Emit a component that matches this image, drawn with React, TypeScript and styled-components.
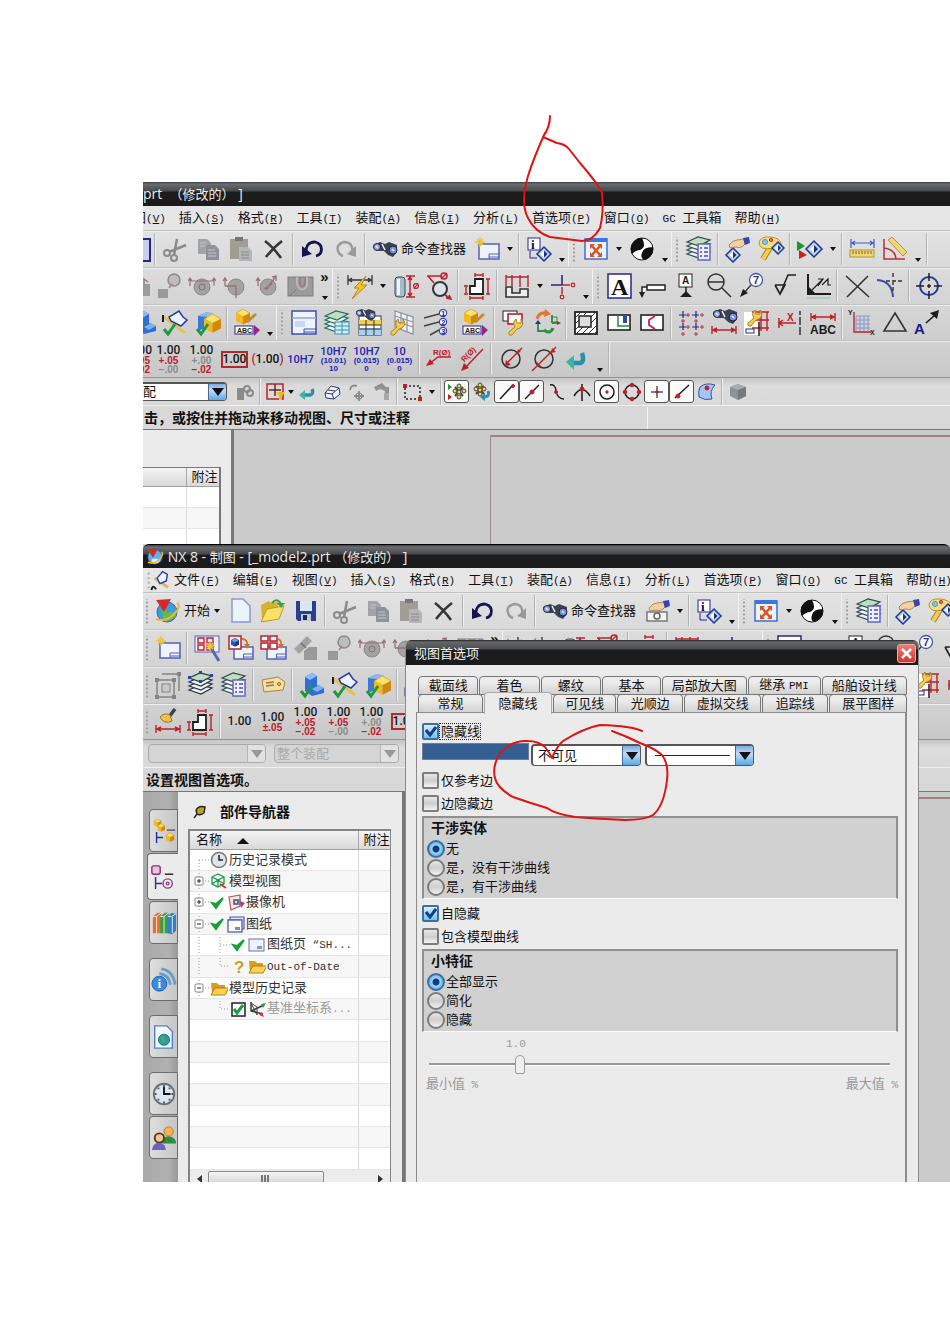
import React, { ReactNode } from 'react';
import styled, { createGlobalStyle, css } from 'styled-components';

const SONG = `"Liberation Sans", "Noto Sans CJK SC", sans-serif`;
const UI = `"Open Sans", "Noto Sans CJK SC", sans-serif`;

const Global = createGlobalStyle`
  * { box-sizing: border-box; }
  body { margin: 0; background: #fff; }
  button, select, input { font: inherit; color: inherit; margin: 0; }
`;

/* ---------- drawing helpers ---------- */
const K = '#1d1d1d';
const R = '#bd2028';
const B = '#26268c';
const G = '#8b8b8b';

const ln = (d: string, stroke = K, w = 1.5, fill = 'none') => (
  <path d={d} stroke={stroke} strokeWidth={w} fill={fill} />
);
const fl = (d: string, fill: string) => <path d={d} fill={fill} />;
const ci = (x: number, y: number, r: number, stroke = K, w = 1.5, fill = 'none') => (
  <circle cx={x} cy={y} r={r} stroke={stroke} strokeWidth={w} fill={fill} />
);
const tx = (x: number, y: number, s: string, size: number, fill = K, font = 'Liberation Sans') => (
  <text x={x} y={y} fontSize={size} fontWeight="bold" fontFamily={`"${font}", sans-serif`} fill={fill}>{s}</text>
);
const diamond = (x: number, y: number, s: number) => (
  <>
    <path d={`M${x} ${y - s}L${x + s} ${y}L${x} ${y + s}L${x - s} ${y}Z`} fill="#c3d2f2" stroke="#1e3a8f" strokeWidth="1.5" />
    <path d={`M${x} ${y - s / 2}L${x + s / 2} ${y}L${x} ${y + s / 2}Z`} fill="#16307f" />
    <path d={`M${x} ${y - s / 2}L${x - s / 2} ${y}L${x} ${y + s / 2}Z`} fill="#fff" />
  </>
);
const wrench = (x: number, y: number) => (
  <g transform={`translate(${x} ${y})`}>
    <path d="M1 13L7 8Q4 4 8 0L9 4L13 4L13 0Q17 5 12 9L9 10L4 16Q0 17 1 13Z" fill="#f2cd4e" stroke="#a8832b" />
  </g>
);
const tick = (x: number, y: number, s = 1) => (
  <path d={`M${x} ${y}L${x + 4 * s} ${y + 5 * s}L${x + 11 * s} ${y - 5 * s}`} fill="none" stroke="#1f9a3a" strokeWidth={3 * s} />
);
const cube = (x: number, y: number, s: number, a = '#ffe268', b = '#f5b81f', c = '#cf8a0c') => (
  <>
    <path d={`M${x} ${y + s * 0.3}L${x + s / 2} ${y}L${x + s} ${y + s * 0.3}L${x + s / 2} ${y + s * 0.55}Z`} fill={a} stroke={c} strokeWidth=".6" />
    <path d={`M${x} ${y + s * 0.3}L${x + s / 2} ${y + s * 0.55}V${y + s * 1.1}L${x} ${y + s * 0.85}Z`} fill={b} />
    <path d={`M${x + s} ${y + s * 0.3}L${x + s / 2} ${y + s * 0.55}V${y + s * 1.1}L${x + s} ${y + s * 0.85}Z`} fill={c} />
  </>
);
const stack = (c = '#2f4a52', green = '#bfe0bd') => (
  <>
    {[16, 12, 8, 4].map((y) => (
      <path key={y} d={`M2 ${y + 3}L13 ${y - 2}L25 ${y + 1}L14 ${y + 7}Z`} fill={y === 4 ? green : '#eef3f2'} stroke={c} strokeWidth="1.2" />
    ))}
  </>
);
const list = (x: number, y: number) => (
  <>
    <rect x={x} y={y} width="12" height="16" fill="#eef0ff" stroke="#6466c0" strokeWidth="1.5" />
    {ln(`M${x + 2} ${y + 4}h2m2 0h4M${x + 2} ${y + 8}h2m2 0h4M${x + 2} ${y + 12}h2m2 0h4`, '#4a4fae')}
  </>
);
const page = (x: number, y: number, w: number, h: number, c = '#5560b8') => (
  <>
    <rect x={x} y={y} width={w} height={h} fill="#f0f3fe" stroke={c} strokeWidth="1.5" />
    {ln(`M${x + w / 2} ${y + h}v-5h${w / 2}m0 3h-${w / 2}`, c, 1)}
  </>
);
const glasses = (x: number, y: number) => (
  <g transform={`translate(${x} ${y})`}>
    <path d="M0 3L7 0L12 2L16 0L24 3L24 10L20 15L15 13L11 9L6 9L1 7Z" fill="#3c434f" />
    <circle cx="4" cy="5" r="3.5" fill="#8ea6e8" stroke="#20242e" />
    <circle cx="20" cy="8" r="4" fill="#7290e6" stroke="#20242e" />
    <path d="M3 4L5 6M19 7L21 9M9 2L12 8" stroke="#e9efff" strokeWidth="1.5" />
  </g>
);
const hand = (x: number, y: number) => (
  <g transform={`translate(${x} ${y})`}>
    <path d="M0 8Q4 3 8 3L15 2L16 7Q12 12 7 10L1 11Z" fill="#f4cf9f" stroke="#9a7448" strokeWidth=".8" />
    <path d="M14 1L20 0L21 6L16 8Z" fill="#3545b5" />
  </g>
);
const hDim = (y: number, x1 = 2, x2 = 26, c = R) =>
  ln(`M${x1} ${y - 4}v8M${x2} ${y - 4}v8M${x1} ${y}H${x2}M${x1 + 5} ${y - 2}L${x1 + 1} ${y}l4 2M${x2 - 5} ${y - 2}L${x2 - 1} ${y}l-4 2`, c, 1.4);
const star = (x: number, y: number) => ln(`M${x - 5} ${y}h10M${x} ${y - 5}v10M${x - 3} ${y - 3}l6 6M${x + 3} ${y - 3}l-6 6`, '#e5c838', 1.5);
const profile = (c = K) => ln('M6 22V14H11V7H19V22Z', c, 1.8, '#fff');
const abc = (
  <>
    {cube(3, 0, 14)}
    <rect x="2" y="17" width="18" height="8" fill="#fff" stroke={B} />
    {tx(4, 24, 'ABC', 7)}
    {ln('M14 13L23 5', '#c68b2a', 3)}
    {fl('M21 16L27 21L21 27Z', '#93278f')}
  </>
);
const swirl = (
  <>
    {ci(14, 14, 11, '#111', 1, '#fff')}
    {fl('M14 3A11 11 0 0 0 4 19Q8 15 12 15Q19 12 14 3Z', '#111')}
    {fl('M25 12Q15 12 14 18Q12 23 16 25Q26 22 25 12Z', '#111')}
  </>
);

/* ---------- 28px toolbar icons ---------- */
const icons: Record<string, ReactNode> = {
  saveEdge: <rect x="5" y="4" width="21" height="22" fill="#c8cfee" stroke={B} strokeWidth="2" />,
  cut: <>{ci(6, 18, 3, G, 2)}{ci(13, 23, 3, G, 2)}{ln('M8 17L25 10M13 20L16 4', G, 2.5)}</>,
  copy: <>{fl('M4 4h9l4 4v11H4Z', '#a2a4aa')}{fl('M12 10h9l4 4v11H12Z', '#8f929b')}{ln('M6 8h6M6 11h5M14 15h7M14 18h8M14 21h8', '#c3c5ca', 1)}</>,
  paste: <>{fl('M3 4h18v20H3Z', '#a19c94')}{fl('M8 2h8v4H8Z', '#77777a')}{fl('M12 12h9l4 4v10H12Z', '#b3b5b8')}{ln('M14 17h8M14 20h8M14 23h8', G, 1)}</>,
  del: ln('M5 6Q13 12 21 23M22 6Q14 12 6 22', '#363636', 2.6),
  undo: <>{ln('M7 19Q6 7 16 7Q24 9 22 17Q21 20 17 21', '#141452', 2.8)}{fl('M3 11L13 19L3 22Z', '#141452')}</>,
  redo: <>{ln('M20 19Q22 7 12 7Q4 9 6 16Q7 20 11 21', '#9a9a9a', 2.4)}{fl('M24 11L15 19L24 22Z', '#9a9a9a')}</>,
  binoc: <g transform="translate(2 7)">{glasses(0, 0)}</g>,
  sheet: <>{page(6, 9, 20, 15)}{star(7, 7)}</>,
  camera: <>{ln('M4 15V24H24V15Z', '#7a7a7a', 1.5, '#f5f5f5')}{ci(14, 19, 3, '#666')}{hand(6, 3)}</>,
  info: <><rect x="3" y="3" width="12" height="12" fill="#fff" stroke={B} />{tx(6, 14, 'i', 13, '#0a0a50', 'Liberation Serif')}{ln('M5 16V23H12', B, 1)}{diamond(19, 19, 7)}</>,
  fit: <><rect x="3" y="4" width="22" height="20" fill="#eaf1ff" stroke="#3a6fd2" strokeWidth="1.5" />{fl('M3 3h22v4H3Z', '#3a78e0')}{ln('M10 11L18 20M18 11L10 20', '#d9541e', 2.5)}{fl('M8 9h5l-5 5ZM20 9h-5l5 5ZM8 22h5l-5-5ZM20 22h-5l5-5Z', '#d9541e')}</>,
  shade: swirl,
  layers: <>{stack()}{list(13, 9)}</>,
  stack: <>{stack('#26324a')}{fl('M1 5h3v3H1ZM12 0h3v3h-3ZM23 3h3v3h-3ZM12 9h3v3h-3Z', '#2f3fb0')}</>,
  handDiamond: <>{diamond(9, 20, 7)}{hand(5, 2)}</>,
  palette: <>{ln('M14 11L6 24', '#a8832b', 6)}{ln('M14 11L6 24', '#f2cd4e', 4)}<path d="M2 8Q3 1 13 2Q24 3 24 9Q24 14 16 13Q3 16 2 8Z" fill="#f7dd7c" stroke="#b89432" />{ci(8, 7, 2.5, '#4f8fd0', 1, '#8cc6f0')}{ci(14, 5, 1.6, '#c33', 1, '#e66')}{diamond(21, 13, 6)}</>,
  play: <>{fl('M1 6L9 11L1 16Z', '#18962f')}{fl('M3 15L11 20L3 24Z', '#cc1f26')}{diamond(18, 14, 8)}</>,
  ruler: <>{ln('M3 4v9M26 4v9M3 8H26M7 6L4 8l3 2M22 6l3 2l-3 2', '#3b5fc0', 1.2)}<rect x="2" y="15" width="24" height="7" fill="#f0d678" stroke="#b49430" />{ln('M5 16v3m3-3v3m3-3v3m3-3v3m3-3v3m3-3v3m3-3v3', '#7c6418', 1)}</>,
  angle: <>{ln('M3 4V24H24M3 13Q14 14 15 24', '#b8303a', 1.5)}<path d="M7 5L11 2L26 17L22 21Z" fill="#f0d678" stroke="#b49430" /></>,
  project: <>{fl('M3 17h10v9H3Z', '#9a9a9a')}{ci(19, 8, 6, G, 1.5, '#bdbdbd')}{ln('M14 16L17 12', '#b07b80', 1.5)}</>,
  gearA: <>{fl('M17 12h9v12h-9Z', '#9c9c9c')}{ln('M20 12V7l4 3', '#a0777a')}</>,
  rotA: <>{ci(14, 15, 8, G, 1, '#a3a3a3')}{ci(14, 15, 3, '#8f6a6d', 1)}{ln('M2 14V6m-2 3l2-3l2 3M26 14V6m-2 3l2-3l2 3M2 9H26', '#987074', 1.2)}</>,
  rotB: <>{ci(15, 15, 8, G, 1, '#a3a3a3')}{ln('M4 14V6m-2 3l2-3l2 3M4 14H15V26', '#987074', 1.3)}</>,
  rotC: <>{ci(14, 15, 8, G, 1, '#a3a3a3')}{ln('M4 14V6m-2 3l2-3l2 3M12 18L22 4M22 9l0-5l-4 1M10 17l8-5', '#987074', 1.3)}</>,
  section: <><rect x="1" y="5" width="25" height="19" fill="#9a9a9a" stroke="#7f7f7f" />{ln('M10 5V12Q14 22 20 14V5', '#b9b9b9', 2)}{ln('M13 6v6q2 5 5 0V6M2 24L9 18', '#8c6d70', 1)}</>,
  bolt: <>{ln('M2 3v10M26 3v10M2 8H26M6 6L3 8l3 2M22 6l3 2l-3 2', '#333', 1.3)}<path d="M20 4L8 16H13L6 27L21 13H15Z" fill="#f6c71c" stroke="#c08312" /></>,
  cylinder: <><rect x="3" y="5" width="10" height="20" rx="3" fill="#a7bac9" stroke="#3d4a57" />{fl('M5 7h3v16H5Z', '#eef5fa')}{ln('M14 4h9M14 25h9M18 5V24M16 8l2-3l2 3M16 21l2 3l2-3', R, 1.4)}{ci(24, 14, 2.3, R, 1.3)}{ln('M22 17L26 11', R, 1)}</>,
  diameter: <>{ci(15, 17, 7, '#30363a', 2, '#dce1e4')}{ln('M2 4H16M3 4L9 11M20 23L26 27M21 26l5 1l-2-4', R, 1.6)}{ci(19, 4, 3, R, 1.5)}{ln('M16 7L22 1', R, 1.2)}</>,
  perimeter: <>{profile()}{ln('M11 3h8M11 1v4M19 1v4M24 7V22M22 7h4M22 22h4M2 14V22M0 14h4M0 22h4M6 26H19M6 24v4M19 24v4', R, 1.4)}</>,
  ordinate: <>{ln('M3 25V15H9V21H17V17H25V25Z', '#333', 1.6, '#eee')}{ln('M3 3V14M9 3V14M17 3V15M25 3V15M3 5H25', R, 1.4)}</>,
  origin: <>{ln('M13 3V13M2 13H13', B, 1.6)}{ln('M13 13H21M13 15V22', R, 1.4)}{ci(24, 13, 1.8, R, 1.2)}{ci(13, 25, 1.8, R, 1.2)}</>,
  note: <><rect x="2" y="2" width="23" height="24" fill="#fff" stroke={B} strokeWidth="1.5" />{tx(5, 23, 'A', 24, '#111', 'Liberation Serif')}</>,
  feature: <>{ln('M3 24V15H8M8 13h18v5H8Z', '#222', 1.5, '#fff')}{fl('M0 20h6l-3 6Z', K)}</>,
  datum: <><rect x="7" y="2" width="13" height="13" fill="#fff" stroke="#222" />{tx(10, 12, 'A', 10)}{ln('M14 15V22')}{fl('M14 19L20 25H8Z', K)}</>,
  symbol: <>{ci(11, 10, 8, '#333')}{ln('M3 10H19M17 16L26 25', '#333')}</>,
  balloon: <>{ci(18, 8, 6.5, '#4b55a8', 1.3, '#fff')}{tx(15, 12, '7', 11, '#2a3596')}{ln('M13 13L5 22', '#333', 1.3)}{fl('M2 25L5 17L10 21Z', K)}</>,
  surface: ln('M4 13H14L9 22L4 13M9 22L17 3H25', '#222', 1.6),
  weld: <>{ln('M4 2V22H27', K, 2)}{fl('M4 22V14L12 22Z', K)}{ln('M8 18L18 8M14 7h5l-5 7M18 13L24 7V13H27', K, 1.2)}{ln('M3 26H27', '#9bb', 1)}</>,
  cross: ln('M3 4L26 25M25 4L4 25', '#333', 1.6),
  centerCurve: <>{ln('M1 8Q16 9 17 25', '#3a4fa8', 2)}{ln('M17 1V5M17 8v5M10 9h4M17 9h3M22 9h4M17 15v4', '#333', 1.4)}</>,
  target: <>{ci(14, 14, 9, '#24399a', 2)}{ln('M14 1V9M14 12v4M14 19v8M1 14H9M12 14h4M19 14h8', '#222', 1.5)}</>,
  assembly: <>{fl('M7 6L14 2L19 5V14L26 17V22L14 25L7 20Z', '#2d6fd6')}{fl('M7 6L14 2L19 5L12 9Z', '#8dbcf5')}{fl('M14 18L21 14L26 17L19 21Z', '#7cb0f2')}{tick(3, 20)}</>,
  sketch: <>{ln('M3 8L24 24', '#e0c34a', 3)}{ln('M10 12L8 8L18 2L22 8L26 11L20 17Z', '#2a38a0', 1.5, '#eef3ff')}{ln('M2 6V13', K, 2)}{tick(3, 20)}</>,
  boxCheck: <>{fl('M4 7L13 3V18L4 22Z', '#3a78d8')}{fl('M4 7L13 3L20 4L12 8Z', '#8cb8f2')}{cube(10, 5, 17)}{tick(3, 20)}</>,
  abc,
  listSheet: <>{page(2, 2, 24, 23, '#3e4fa8')}{fl('M5 12h10v6H5Z', '#c8d6f8')}{ln('M2 9H26', '#8fa4df')}</>,
  layerTable: <>{stack('#2b6b62')}<rect x="12" y="13" width="14" height="12" fill="#cdeef8" stroke="#3b91b0" />{ln('M12 17h14M12 21h14M19 13v12', '#3b91b0', 1)}</>,
  tableBinoc: <><rect x="3" y="7" width="22" height="19" fill="#fff" stroke="#333" />{fl('M3 11h22v5H3Z', '#f5ce52')}{fl('M3 19h22v7H3Z', '#a9d0f2')}{ln('M3 16h22M3 20h22M10 11v15M18 11v15', '#333', 1)}<g transform="scale(.8)">{glasses(0, 0)}</g></>,
  gridWrench: <>{ln('M6 2L24 8V25L6 18ZM12 4V20M18 6V22M6 7L24 13M6 12L24 18', '#8a90a0', 1.2, '#f1f2f6')}{wrench(1, 10)}</>,
  leaders: <>{ln('M2 9L17 5M2 17L17 13M8 26L17 21', '#444', 1.5)}{[4, 13, 22].map((y, i) => <g key={y}>{ci(21, y, 3.6, '#3a45a8', 1.2, '#fff')}{tx(19, y + 3, `${i + 1}`, 8, B)}</g>)}</>,
  redWrench: <><rect x="3" y="2" width="14" height="10" fill="#fff" stroke="#222" /><rect x="8" y="5" width="14" height="10" fill="#fff" stroke={R} strokeWidth="1.6" />{wrench(8, 10)}</>,
  sync: <>{ln('M4 10Q6 3 13 4', '#e5752e', 3)}{fl('M12 0L18 5L11 8Z', '#e5752e')}{ln('M5 15V22H12M19 14V6M19 14H26', '#2c8f43', 1.8)}<rect x="19" y="8" width="5" height="5" fill="none" stroke="#2c8f43" />{fl('M24 12l4 2l-4 2Z', R)}{ln('M11 21Q17 26 20 19', '#2c8f43', 3)}{fl('M2 15l3-4l3 4Z', '#24369a')}</>,
  hatch: <><rect x="3" y="3" width="22" height="22" fill="#fff" stroke="#222" strokeWidth="1.8" />{ln('M3 9L9 3M3 15L7 11M3 21L7 17M4 25L11 18M10 25L17 18M16 25L25 16M22 25L25 22M19 14L25 8M19 8L24 3M12 6L15 3', '#333', 1)}<rect x="7" y="7" width="12" height="11" fill="#ddd" stroke="#222" strokeWidth="1.5" /></>,
  greenRect: <><rect x="3" y="6" width="22" height="15" fill="#fff" stroke="#222" strokeWidth="1.6" />{ln('M13 7V17H24', '#258a38')}{fl('M18 6h4v8h-4Z', '#3744a8')}</>,
  zigzag: <><rect x="3" y="6" width="22" height="15" fill="#fff" stroke="#222" strokeWidth="1.6" />{ln('M17 7L11 11V16L17 20', '#c02060', 1.8)}</>,
  crossGrid: <>{ln('M6 2v7M2 6h7M19 2v7M15 6h7M6 14v7M2 18h7M19 14v7M15 18h7', B, 1.2)}{[[11, 6], [25, 6], [11, 18], [25, 18], [6, 12], [19, 12], [6, 25], [19, 25]].map(([x, y]) => <g key={`${x}-${y}`}>{ci(x, y, 1.2, R, 1)}</g>)}</>,
  binocDim: <>{glasses(3, 0)}{hDim(21)}</>,
  wrenchDim: <><rect x="1" y="3" width="14" height="23" fill="#fff" />{ln('M9 3H26M18 3V22M9 11H26M24 3V22M9 19H26', R, 1.4)}{wrench(4, 1)}<rect x="3" y="20" width="8" height="4" fill="#fff" stroke={B} />{ln('M16 13V27', K, 1.4)}</>,
  xDim: <>{ln('M3 9V19M3 14H20M7 11L3 14l4 3', R, 1.5)}{ln('M24 2V6M24 8v8M24 18v8', '#333', 1.5)}{tx(11, 12, 'X', 10, R)}</>,
  abcDim: <>{hDim(8)}{tx(1, 25, 'ABC', 12)}</>,
  grid: <>{ln('M8 7v15M12 7v15M16 7v15M20 7v15M8 7h14M8 11h14M8 15h14M8 19h14', '#8795cf', 1)}{ln('M6 3V23H23', R, 1.3)}{tx(0, 6, 'Y', 7)}{tx(22, 26, 'X', 7)}</>,
  triangle: ln('M14 4L25 22H3Z', '#333', 1.6),
  arrowA: <>{tx(0, 25, 'A', 15, '#1a1a80')}{ln('M12 14L21 6', K, 1.6)}{fl('M25 1L23 10L16 4Z', K)}</>,
  radius: <>{tx(8, 10, 'R(Ø)', 8, R)}{ln('M26 12H13L4 19', R, 1.5)}{fl('M1 21L5 14L9 19Z', R)}</>,
  radiusDiag: <><g transform="rotate(-45 14 14)">{tx(6, 11, 'R(Ø)', 8, R)}</g>{ln('M25 4L7 23', R, 1.5)}{fl('M3 26L6 18L11 23Z', R)}</>,
  circIn: <>{ci(14, 14, 9, '#333', 1.5)}{ln('M9 19L25 3', R, 1.5)}{fl('M8 21l1-6l5 5ZM20 8l1-4l3 3Z', R)}</>,
  circOut: <>{ci(14, 14, 9, '#333', 1.5)}{ln('M2 26L26 2', R, 1.5)}{fl('M7 21l-1-5l6 6ZM21 8l1-5l4 4Z', R)}</>,
  back: <>{ln('M10 18H17Q22 17 19 8', '#2b8fb0', 4.5)}{fl('M3 17L11 10V25Z', '#3cb6a0')}</>,
  nx: <>{ci(14, 15, 10, '#2b6bb5', 1, '#3f9be0')}{fl('M7 8Q13 8 14 16Q19 13 23 19Q18 25 11 24Z', '#63bb4c')}<path d="M3 3L18 2L11 15Z" fill="#d8272b" />{ln('M3 22Q14 26 23 15Q28 8 24 6', '#f0b832', 2)}</>,
  nxTitle: <>{ci(14, 14, 11, '#2b6bb5', 1, '#58b4ee')}{fl('M9 18Q14 14 22 20Q16 26 9 23Z', '#e8f4fb')}<path d="M3 3L18 2L11 15Z" fill="#d8272b" />{ln('M3 22Q14 26 23 15Q28 8 24 6', '#f0b832', 2.5)}</>,
  newDoc: <path d="M6 2H17L24 9V25H6Z" fill="#edf2ff" stroke="#8b99d2" strokeWidth="1.5" />,
  open: <>{fl('M2 8L10 4L12 6L19 5V22L3 25Z', '#d8b12d')}<path d="M2 25L8 12L25 9L20 22Z" fill="#f8e06c" stroke="#c49a22" />{ln('M13 6Q18 0 22 7', '#39a04a', 2)}{fl('M18 6h8l-4 5Z', '#39a04a')}</>,
  save: <>{fl('M4 4H24V24H6L4 22Z', '#27418f')}{fl('M8 4h12v10H8Z', '#dce6f5')}{fl('M9 17h10v7H9Z', '#c7ccd4')}{fl('M11 18h4v5h-4Z', '#1b2858')}</>,
  viewWand: <><rect x="2" y="2" width="24" height="16" fill="#edf0ff" stroke="#5560b8" />{ln('M5 4h6v5H5ZM14 4h6v5h-6ZM5 11h6v5H5ZM14 11h6v5h-6Z', R, 1.4)}{ln('M18 14L26 27', '#5865bd', 3)}{star(17, 12)}</>,
  viewBlue: <>{page(8, 13, 19, 12)}<rect x="3" y="2" width="12" height="13" fill="#fff" stroke={R} strokeWidth="1.5" />{cube(5, 4, 8, '#76a6ee', '#2458b8', '#173878')}{ln('M16 5Q22 5 21 12', '#c7792b', 1.8)}{fl('M18 10h6l-3 5Z', '#c7792b')}</>,
  viewGrid: <>{page(8, 13, 19, 12)}{ln('M2 2h7v5H2ZM11 2h7v5h-7ZM2 9h7v6H2ZM11 9h7v6h-7Z', R, 1.5, '#fff')}{ln('M19 5Q23 6 22 12', '#c7792b', 1.8)}{fl('M19 10h6l-3 5Z', '#c7792b')}</>,
  auxView: <>{fl('M2 15L15 2L20 7L7 20Z', '#a3a3a3')}{fl('M12 17l5-4h8v13H12Z', '#9a9a9a')}{ln('M9 9l5 5', '#8a6668')}</>,
  group: <>{ln('M3 9h17v17H3ZM8 3h17v17', '#858585', 1.5)}{fl('M1 7h4v4H1ZM18 7h4v4h-4ZM1 24h4v4H1ZM18 24h4v4h-4ZM23 1h4v4h-4Z', '#858585')}<rect x="8" y="13" width="8" height="8" fill="#c9c9c9" stroke="#858585" /></>,
  tag: <><path d="M3 9L19 6L26 11L24 19L5 21Z" fill="#f6dfa4" stroke="#a9863c" />{ln('M7 12l8-1M7 15l8-1', '#97793a')}{ci(20, 13, 1.5, '#7c6226', 1)}</>,
  brushDim: <>{ln('M15 9L21 1', '#3a4350', 3.5)}<path d="M6 9Q10 4 16 7L18 13Q10 17 6 9Z" fill="#eebf4f" stroke="#9a7630" />{hDim(21)}</>,
  menuSketch: <>{fl('M3 6h2v2H3ZM3 11h2v2H3ZM3 16h2v2H3ZM3 21h2v2H3Z', '#aaa')}{ln('M10 12L25 22', '#d8bc4a', 3)}{ln('M13 12L19 5L24 8L23 15L16 18Z', '#2a38a0', 1.5, '#eef3ff')}{ln('M7 25Q8 18 12 24', K, 2)}</>,
};

/* ---------- 20px selection-bar icons ---------- */
const small: Record<string, ReactNode> = {
  gearBox: <>{fl('M2 6h7v12H2Z', G)}{ci(12, 7, 3, G, 2)}{ci(15, 11, 3, G, 2)}</>,
  filter: <><rect x="1" y="2" width="16" height="15" fill="none" stroke={R} strokeWidth="1.5" />{ln('M9 2V14M3 8H15', '#5a2b2b')}{fl('M10 10h9l-3 4v4h-3v-4Z', '#f2b91f')}</>,
  back: <>{ln('M7 13H13Q17 12 15 7', '#2b8fb0', 3.5)}{fl('M2 13L8 8V18Z', '#3cb6a0')}</>,
  eraser: <path d="M3 11L9 4L17 6L18 12L12 17L4 16ZM3 11L10 12L12 17M10 12L17 6M6 8L13 9" fill="#eef1ff" stroke="#333a60" />,
  rotMove: <>{ln('M3 8Q4 2 10 4M12 9v10M7 14h10', G, 1.8)}{ci(12, 14, 3, G, 1.2)}</>,
  hammer: <>{fl('M2 5L10 1L14 5H17V12H13V9L8 7L4 9Z', '#929292')}{fl('M12 11h5v7h-5Z', '#a9a9a9')}</>,
  lasso: <><path d="M2 4H17V17H2Z" fill="none" stroke="#222" strokeWidth="1.5" strokeDasharray="2 2" />{fl('M0 2h4v4H0ZM15 15h4v4h-4Z', R)}</>,
  snapOn: <>{fl('M1 2l4 3l-4 3Z', '#26933a')}{fl('M1 12l4 3l-4 3Z', R)}{ln('M8 5L16 14M16 5L8 14', '#444', 2)}{[[12, 4], [17, 9], [12, 15], [8, 9], [12, 10]].map(([x, y]) => <g key={`${x}-${y}`}>{ci(x, y, 2, '#444', 1, '#f0d84a')}</g>)}</>,
  snapOff: <>{ln('M4 4L12 12M12 4L4 12', '#444', 2)}{[[8, 3], [12, 7], [8, 12], [4, 7], [8, 8]].map(([x, y]) => <g key={`${x}-${y}`}>{ci(x, y, 2, '#444', 1, '#f0d84a')}</g>)}{ln('M13 15Q18 14 16 9', '#2b8fb0', 3)}{fl('M8 15l5-4v8Z', '#2b8fb0')}</>,
  endPoint: <>{ln('M3 17L15 4')}{ci(16, 4, 1.5, R, 1, R)}</>,
  midPoint: <>{ln('M3 17L17 3')}{ci(10, 10, 2, R, 1, R)}</>,
  control: <>{ln('M3 3Q8 2 9 8Q10 17 17 17')}{ci(9, 10, 1.5, R, 1, R)}</>,
  intersect: <>{ln('M10 2V19M2 14Q10 1 18 14')}{ci(10, 7, 2, R, 1, R)}</>,
  center: <>{ci(10, 10, 7)}{ci(10, 10, 1.2, R, 1, R)}</>,
  quadrant: <>{ci(10, 10, 7)}{ci(10, 3, 1.8, R, 1, R)}{ci(10, 17, 1.8, R, 1, R)}{ci(3, 10, 1.8, R, 1, R)}{ci(17, 10, 1.8, R, 1, R)}</>,
  point: <>{ln('M10 4V16M4 10H16', '#555')}{ci(10, 10, 1.2, R, 1, R)}</>,
  onCurve: <>{ln('M3 16L17 3')}{ci(6, 14, 2, R, 1, R)}</>,
  onFace: <><path d="M3 5Q9 0 18 3Q12 9 15 17Q8 19 2 15Q1 9 3 5Z" fill="#a6c5f4" stroke="#2d55ad" />{ci(10, 6, 2, R, 1, R)}</>,
  solid: <>{fl('M2 5L10 2L18 5V14L10 18L2 14Z', '#8e9298')}{fl('M2 5L10 2L18 5L10 8Z', '#a9adb3')}{fl('M10 8L18 5V14L10 18Z', '#757a82')}</>,
};

const Svg = ({ size = 28, box = 28, children }: { size?: number; box?: number; children: ReactNode }) => (
  <svg width={size} height={size} viewBox={`0 0 ${box} ${box}`} aria-hidden="true">{children}</svg>
);

/* ---------- window frame ---------- */
const Page = styled.main`
  position: relative;
  padding: 182px 0 162px 143px;
  overflow: hidden;
  font: 13px/16px ${SONG};
  color: #111;
`;
const Window = styled.section<{ $h: number }>`
  position: relative;
  display: flex;
  flex-direction: column;
  height: ${(p) => p.$h}px;
  overflow: hidden;
  background: #cbcbcb;
`;
const TitleBar = styled.header<{ $round?: boolean }>`
  flex: none;
  display: flex;
  align-items: center;
  height: 24px;
  padding: 0 3px 0 0;
  color: #ececec;
  font: 13px/18px ${UI};
  white-space: pre;
  background: linear-gradient(#3a3d3f 0, #6a6d70 2px, #47494b 9px, #1c1c1c 10px, #1a1a1a 100%);
  ${(p) => p.$round && css`
    border-top: 1px solid #000;
    border-radius: 6px 6px 0 0;
    padding-left: 3px;
  `}
`;
const TitleLatin = styled.span`
  font-size: 14px;
`;
const MenuBar = styled.nav`
  flex: none;
  display: flex;
  align-items: center;
  gap: 13px;
  height: 24px;
  background: #e6e6e6;
  overflow: hidden;
`;
const MenuButton = styled.button`
  flex: none;
  padding: 0;
  border: 0;
  background: none;
  line-height: 16px;
  white-space: pre;
`;
const FirstMenu = styled.span`
  flex: none;
  margin-left: -10px;
`;
const Latin = styled.span`
  font-family: "Liberation Mono", monospace;
  font-size: 11px;
`;

const tones = { a: ['#e2e2e2', '#dadada'], b: ['#dcdcdc', '#d4d4d4'], c: ['#d6d6d6', '#cecece'], d: ['#d2d2d2', '#c8c8c8'] };
type Tone = keyof typeof tones;
const Bar = styled.div<{ $tone: Tone; $h?: number }>`
  flex: none;
  display: flex;
  align-items: center;
  height: ${(p) => p.$h ?? 37}px;
  overflow: hidden;
  border-top: 1px solid #c2c2c2;
  box-shadow: inset 0 1px #ededed;
  background: linear-gradient(${(p) => tones[p.$tone][0]}, ${(p) => tones[p.$tone][1]});
`;
const Tool = styled.button<{ $w?: number; $clip?: boolean; $on?: boolean }>`
  flex: none;
  display: flex;
  align-items: center;
  justify-content: ${(p) => (p.$clip ? 'flex-end' : 'center')};
  width: ${(p) => p.$w ?? 33}px;
  height: ${(p) => ((p.$w ?? 33) === 25 ? 23 : 34)}px;
  padding: 0;
  border: 0;
  background: none;
  overflow: hidden;
  svg { flex: none; }
  ${(p) => p.$on && css`
    border: 1px solid #555;
    border-radius: 3px;
    background: #fafafa;
  `}
`;
const Sep = styled.i`
  flex: none;
  width: 2px;
  height: 32px;
  margin: 0 2px;
  border-left: 1px solid #b4b4b4;
  border-right: 1px solid #efefef;
`;
const GripBox = styled.i<{ $first?: boolean }>`
  flex: none;
  width: ${(p) => (p.$first ? 8 : 11)}px;
  height: 35px;
  padding: 5px 0;
  border-left: ${(p) => (p.$first ? 0 : 1)}px solid #f2f2f2;
  background: linear-gradient(#a0a0a0 2px, #f0f0f0 2px, transparent 3px) center / 2px 4px repeat-y;
  background-clip: content-box;
`;
const Drop = styled.button<{ $low?: boolean; $w?: number }>`
  flex: none;
  display: flex;
  justify-content: center;
  align-items: ${(p) => (p.$low ? 'flex-end' : 'center')};
  width: ${(p) => p.$w ?? 13}px;
  height: 26px;
  padding: 0;
  border: 0;
  background: none;
`;
const More = styled(Drop)`
  flex-direction: column;
  justify-content: space-between;
  align-items: center;
  width: 15px;
  height: 28px;
  font: bold 15px/10px "Liberation Sans", sans-serif;
`;
const Finder = styled.button`
  flex: none;
  display: flex;
  align-items: center;
  gap: 2px;
  padding: 0 4px 0 3px;
  border: 0;
  background: none;
  white-space: nowrap;
`;
const Start = styled(Finder)`
  gap: 3px;
  padding: 0 0 0 2px;
`;
const Dim = styled.span`
  display: flex;
  flex-direction: column;
  align-items: center;
`;
const DimLine = styled.span<{ $c: string; $k: 'main' | 'fit' | 'tol' | 'range' }>`
  color: ${(p) => p.$c};
  font: ${(p) => ({
    main: '500 12px/11px Roboto, sans-serif',
    fit: '500 11px/11px Roboto, sans-serif',
    tol: 'bold 10px/9px "Liberation Sans", sans-serif',
    range: 'bold 8px/8px "Liberation Sans", sans-serif',
  }[p.$k])};
`;
const DimBox = styled.span<{ $border?: boolean }>`
  padding: 1px 0;
  border: ${(p) => (p.$border ? 2 : 0)}px solid #b3272d;
  font: 500 12px/11px Roboto, sans-serif;
`;

const Caret = () => <svg width="6" height="4" aria-hidden="true"><path d="M0 0H6L3 4Z" fill="#111" /></svg>;

const BLUE = '#2222b4';
const dims: Record<string, [string, string][]> = {
  d1: [['1.00', K]],
  d2: [['1.00', K], ['±.05', R]],
  d3: [['1.00', K], ['+.05', R], ['−.02', R]],
  d4: [['1.00', K], ['+.05', R], ['−.00', G]],
  d5: [['1.00', K], ['+.00', G], ['−.02', R]],
  h1: [['10H7', BLUE]],
  h2: [['10H7', BLUE], ['(10.01)', BLUE], ['10', BLUE]],
  h3: [['10H7', BLUE], ['(0.015)', BLUE], ['0', BLUE]],
  h4: [['10', BLUE], ['(0.015)', BLUE], ['0', BLUE]],
};

/* Token strip: | separator, : grip, v drop-down, . overflow caret, > more, ~x clipped tool */
const Strip = ({ items, clip = 9 }: { items: string; clip?: number }) => (
  <>
    {items.split(' ').map((t, i) => {
      if (t === '|') return <Sep key={i} />;
      if (t === ':') return <GripBox key={i} $first={i === 0} />;
      if (t === 'v' || t === '.') return <Drop key={i} $low={t === '.'} aria-label="More"><Caret /></Drop>;
      if (t === '>') return <More key={i} aria-label="More tools"><span>»</span><Caret /></More>;
      if (t === 'finder') return <Finder key={i}><Svg>{icons.binoc}</Svg>命令查找器</Finder>;
      if (t === 'start') return <Start key={i}><Svg>{icons.nx}</Svg>开始</Start>;
      const clipped = t[0] === '~';
      const name = clipped ? t.slice(1) : t;
      let body: ReactNode;
      if (dims[name]) {
        const fit = name[0] === 'h';
        body = (
          <Dim>
            {dims[name].map(([s, c], k) => (
              <DimLine key={k} $c={c} $k={fit ? (k ? 'range' : 'fit') : (k ? 'tol' : 'main')}>{s}</DimLine>
            ))}
          </Dim>
        );
      } else if (name === 'boxed') body = <DimBox $border>1.00</DimBox>;
      else if (name === 'paren') body = <DimBox><DimLine $c={R} $k="main">(</DimLine>1.00<DimLine $c={R} $k="main">)</DimLine></DimBox>;
      else body = <Svg>{icons[name]}</Svg>;
      return <Tool key={i} $clip={clipped} $w={clipped ? clip : 33} aria-label={name}>{body}</Tool>;
    })}
  </>
);

const VIEW_TOOLS = 'info . : fit v shade . : layers | handDiamond palette | play v | ruler angle . |';
const DIM_TOOLS = 'project rotA rotB rotC section > : bolt v cylinder diameter | perimeter | ordinate v origin . : note feature datum symbol balloon surface weld | cross centerCurve | target';
const TABLE_TOOLS = 'abc . : listSheet layerTable tableBinoc gridWrench leaders | abc | redWrench sync | hatch greenRect zigzag | crossGrid binocDim wrenchDim xDim abcDim | grid triangle arrowA';

const menus: [string, string][] = [
  ['文件', 'F'], ['编辑', 'E'], ['视图', 'V'], ['插入', 'S'], ['格式', 'R'], ['工具', 'T'], ['装配', 'A'],
  ['信息', 'I'], ['分析', 'L'], ['首选项', 'P'], ['窗口', 'O'], ['GC 工具箱', ''], ['帮助', 'H'],
];
const MenuItem = ({ label, hot }: { label: string; hot: string }) => (
  <MenuButton>
    {label.startsWith('GC') ? <><Latin>GC </Latin>工具箱</> : label}
    {hot && <Latin>(<u>{hot}</u>)</Latin>}
  </MenuButton>
);

/* ---------- selection bar, prompt ---------- */
const SelectBar = styled.div`
  flex: none;
  display: flex;
  align-items: center;
  height: 28px;
  overflow: hidden;
  border-top: 1px solid #949494;
  background: linear-gradient(#c6c6c6, #dcdcdc 8px, #d9d9d9);
`;
const Indent = styled.span`
  flex: none;
  width: 5px;
`;
const Prompt = styled.p<{ $pad: number }>`
  flex: none;
  display: flex;
  align-items: center;
  height: 25px;
  margin: 0;
  padding-left: ${(p) => p.$pad}px;
  font-size: 14px;
  font-weight: bold;
  white-space: nowrap;
  border-top: 1px solid #f0f0f0;
  border-bottom: 1px solid #777;
  background: #d8d8d8;
`;
const PromptText = styled.span`
  flex: none;
  width: 504px;
  height: 22px;
  line-height: 22px;
  border-right: 1px solid #f2f2f2;
`;
const ComboWrap = styled.span<{ $w: number; $ghost?: boolean; $cut?: boolean }>`
  position: relative;
  flex: none;
  display: flex;
  width: ${(p) => p.$w}px;
  height: ${(p) => (p.$ghost || p.$cut ? 19 : 22)}px;
  margin-right: ${(p) => (p.$ghost ? 8 : p.$cut ? 5 : 4)}px;
  border: ${(p) => (p.$ghost ? '1px solid #aaa' : '1px solid #555')};
  border-width: ${(p) => (p.$cut ? '2px 1px 1px 0' : p.$ghost ? '1px' : '2px 1px 1px 2px')};
  border-radius: ${(p) => (p.$cut ? '0 4px 4px 0' : '4px')};
  background: ${(p) => (p.$ghost ? '#d5d5d5' : '#fff')};
  overflow: hidden;
  select {
    width: 100%;
    padding: 0 20px 0 ${(p) => (p.$cut ? 0 : p.$ghost ? 2 : 5)}px;
    border: 0;
    appearance: none;
    background: none;
    color: ${(p) => (p.$ghost ? '#aaa' : '#111')};
    opacity: 1;
  }
`;
const ComboArrow = styled.span<{ $ghost?: boolean }>`
  position: absolute;
  top: 0;
  right: 0;
  bottom: 0;
  width: 18px;
  display: flex;
  align-items: center;
  justify-content: center;
  pointer-events: none;
  border-left: 1px solid ${(p) => (p.$ghost ? '#b5b5b5' : '#47689c')};
  background: ${(p) => (p.$ghost ? '#e2e2e2' : 'linear-gradient(#7fabdf, #c3dcf5 40%, #58a9e6)')};
`;
const LineSample = styled.svg`
  position: absolute;
  left: 8px;
  top: 9px;
  pointer-events: none;
`;
type ComboProps = { w: number; label: string; value: string; ghost?: boolean; cut?: boolean; line?: boolean };
const Combo = ({ w, label, value, ghost, cut, line }: ComboProps) => (
  <ComboWrap $w={w} $ghost={ghost} $cut={cut}>
    <select aria-label={label} disabled={ghost} defaultValue={value}><option>{value}</option></select>
    {line && <LineSample width="75" height="1"><rect width="75" height="1" fill="#1c1c80" /></LineSample>}
    <ComboArrow $ghost={ghost}>
      <svg width="12" height="8" aria-hidden="true"><path d="M0 0H12L6 8Z" fill={ghost ? '#999' : '#10131c'} /></svg>
    </ComboArrow>
  </ComboWrap>
);

/* ---------- top window body ---------- */
const Body = styled.div`
  flex: 1;
  display: flex;
  min-height: 0;
`;
const SidePanel = styled.div<{ $w: number }>`
  flex: none;
  width: ${(p) => p.$w}px;
  background: #ebebeb;
  border-right: 3px solid #777;
`;
const CanvasArea = styled.div<{ $gap: number; $top: number }>`
  flex: 1;
  min-width: 0;
  padding: ${(p) => p.$top}px 0 0 ${(p) => p.$gap}px;
`;
const Sheet = styled.div`
  height: 100%;
  border-top: 2px solid #9b8484;
  border-left: 1px solid #9d8f8f;
`;
const Grid = styled.table`
  width: 100%;
  border-collapse: collapse;
  table-layout: fixed;
  th {
    height: 18px;
    padding: 0 0 0 6px;
    font-weight: normal;
    text-align: left;
    line-height: 16px;
    background: linear-gradient(#f4f4f4, #d9d9d9);
    border-bottom: 1px solid #a0a0a0;
  }
  th + th, td + td { border-left: 1px solid #dadada; }
  th + th { padding-left: 5px; border-left-color: #aaa; }
  td { height: 21px; padding: 0; border-bottom: 1px solid #e6e6e6; background: #fff; }
  tr:nth-child(3n) td { height: 22px; }
  tr:nth-child(2n) td { background: #f6f6f6; }
`;
const TopGrid = styled.div`
  width: 78px;
  height: 77px;
  margin-top: 37px;
  overflow: hidden;
  border: 1px solid #777;
  border-width: 1px 2px 0 0;
`;

/* ---------- resource bar & navigator ---------- */
const Rail = styled.div`
  flex: none;
  display: flex;
  flex-direction: column;
  align-items: flex-end;
  width: 35px;
  padding-top: 17px;
  background: linear-gradient(90deg, #a9a9a9, #b2b2b2 25px, #989898);
`;
const RailTab = styled.button<{ $on?: boolean; $gap?: boolean }>`
  display: flex;
  align-items: center;
  justify-content: center;
  width: ${(p) => (p.$on ? 31 : 29)}px;
  height: ${(p) => (p.$on ? 47 : 43)}px;
  margin: 0 0 ${(p) => (p.$gap ? 14 : 1)}px;
  padding: 0;
  border: 1px solid #6d6d6d;
  border-right: ${(p) => (p.$on ? 0 : 1)}px solid #6d6d6d;
  border-radius: 4px 0 0 4px;
  background: ${(p) => (p.$on ? '#ebebeb' : 'linear-gradient(90deg, #dedede, #c6c6c6)')};
`;
const NavHead = styled.h2`
  display: flex;
  align-items: center;
  gap: 13px;
  height: 37px;
  margin: 0;
  padding: 3px 0 0 15px;
  font: bold 14px/18px ${SONG};
`;
const NavFrame = styled.div`
  margin: 0 11px 0 10px;
  border: 2px solid #858585;
  border-bottom: 0;
  border-right-width: 1px;
  background: #fff;
`;
const TreeCell = styled.div<{ $dim?: boolean }>`
  display: flex;
  align-items: center;
  height: 20px;
  overflow: hidden;
  white-space: pre;
  color: ${(p) => (p.$dim ? '#9a9a9a' : '#333')};
  svg { flex: none; }
`;
const TreeText = styled.span`
  padding-left: 1px;
  line-height: 16px;
`;
const Scroll = styled.div`
  display: flex;
  align-items: center;
  justify-content: space-between;
  height: 18px;
  padding: 0 6px;
  background: #ececec;
`;
const Thumb = styled.div`
  width: 116px;
  height: 16px;
  margin-right: 49px;
  border: 1px solid #8a8a8a;
  border-radius: 2px;
  background: linear-gradient(#f6f6f6, #cecece);
  display: flex;
  justify-content: center;
  align-items: center;
`;

const dash = { stroke: '#999', strokeDasharray: '1 2', fill: 'none' };
const Guide = ({ kind }: { kind: string }) => {
  const child = kind[0] === 'c';
  const w = child ? 41 : 20;
  return (
    <svg width={w} height="22" aria-hidden="true">
      {child
        ? <path d={kind === 'cm' ? 'M30 0V22M30 11H40' : 'M30 0V11H40'} {...dash} />
        : <path d={kind === 'f' ? 'M9 11V22M9 11H19' : 'M9 0V22M9 11H19'} {...dash} />}
      {kind === 'ct' || kind === 'cm' ? <path d="M9 0V22" {...dash} /> : null}
      {(kind === '+' || kind === '-') && (
        <>
          <rect x="5" y="7" width="8" height="8" rx="1" fill="#fff" stroke="#888" />
          <path d={kind === '+' ? 'M7 11H11M9 9V13' : 'M7 11H11'} stroke="#222" />
        </>
      )}
    </svg>
  );
};
const folder = <>{fl('M1 4H7L9 6H15V9H5L2 15Z', '#d99d1b')}<path d="M1 16L5 9H19L15 16Z" fill="#fbd253" stroke="#b87d12" /></>;
const mark: Record<string, ReactNode> = {
  clock: <>{ci(9, 9, 7.5, '#777', 1.5, '#dfe7ee')}{ln('M9 4V9H13', '#222')}</>,
  model: <>{ln('M2 5L8 2L14 5V12L8 15L2 12ZM2 5L8 8L14 5M8 8V15M2 12L8 8L14 12', '#1d9a52', 1.3)}{ln('M10 12L16 16', '#d33', 2)}</>,
  cam: <>{ln('M2 4L13 2V13L4 17Z', '#c84852', 1.2, '#fbeaea')}{fl('M6 6h8v6H6Z', '#7a80a8')}{fl('M13 8l5 2l-4 5Z', '#b23a78')}{ci(9, 9, 2, '#444', 1, '#cdf')}</>,
  sheets: <>{ln('M3 5V2H17V14H15M1 5H15', '#4c5ba8', 1.2, '#dfe6ff')}<rect x="1" y="5" width="14" height="12" fill="#fff" stroke="#4c5ba8" strokeWidth="1.3" />{fl('M8 12h5v3H8Z', '#7d89c4')}</>,
  sheet: <><rect x="1" y="3" width="15" height="12" fill="#eef2ff" stroke="#5f6ead" />{fl('M9 10h5v3H9Z', '#8994c8')}</>,
  folder,
  csys: <>{ln('M3 2V11L15 14M3 11L16 5', '#333', 1.4)}{ln('M3 3L9 7V15Z', '#444', 1)}{fl('M18 3l-5 1l2 4Z', '#2a9b45')}{fl('M16 17l-5-2l3-3Z', '#d33')}</>,
  ok: <path d="M2 9L6 14L13 4L6 10Z" fill="#18a038" stroke="#18a038" strokeWidth="2" />,
  ask: tx(3, 15, '?', 17, '#c5a415'),
  box: <><rect x="1" y="3" width="13" height="13" fill="#fff" stroke="#222" strokeWidth="1.5" /><path d="M3 9L6 13L12 5" stroke="#18a038" strokeWidth="3" fill="none" /></>,
};
const tree: { g: string; m?: string; i: string; t: ReactNode; dim?: boolean }[] = [
  { g: 'f', i: 'clock', t: '历史记录模式' },
  { g: '+', i: 'model', t: '模型视图' },
  { g: '+', m: 'ok', i: 'cam', t: '摄像机' },
  { g: '-', m: 'ok', i: 'sheets', t: '图纸' },
  { g: 'cm', m: 'ok', i: 'sheet', t: <>图纸页<Latin> “SH...</Latin></> },
  { g: 'ct', m: 'ask', i: 'folder', t: <Latin>Out-of-Date</Latin> },
  { g: '-', i: 'folder', t: '模型历史记录' },
  { g: 'cl', m: 'box', i: 'csys', t: <>基准坐标系<Latin>...</Latin></>, dim: true },
];

const railTabs: { name: string; on?: boolean; gap?: boolean; art: ReactNode }[] = [
  { name: 'assembly', art: <>{cube(3, 1, 8)}{cube(7, 6, 8)}{cube(16, 16, 9)}{ln('M6 15V27M6 21H13', '#23309a', 1.5)}{ln('M17 13h9', '#555')}</> },
  { name: 'part', on: true, art: <><rect x="2" y="2" width="9" height="9" rx="2" fill="#e7c7dc" stroke="#8b2f74" strokeWidth="1.5" />{ln('M6 14V27M6 21H13', '#23309a', 1.5)}{ci(19, 21, 5, '#8b3f84', 1.5)}{ci(19, 21, 1.5, '#8b3f84', 1.5)}{ln('M16 11h9')}</> },
  { name: 'library', gap: true, art: <>{fl('M2 7L7 3H11V25H2Z', '#e8702c')}{fl('M10 7L15 3H19V25H10Z', '#35a045')}{fl('M18 7L22 3L27 4V22L23 26L18 25Z', '#2f82c8')}{ln('M2 7H6L11 3M10 7H14L19 3M18 7H22L27 4M6 7V25M14 7V25M23 7V25', '#e9e9e9', 1)}</> },
  { name: 'info', gap: true, art: <>{ln('M9 7Q19 8 21 19M11 2Q24 4 26 19', '#6c9bc8', 3)}{ci(9, 18, 8, '#1c5fb4', 1, '#3a8ae0')}{tx(7, 23, 'i', 14, '#fff', 'Liberation Serif')}</> },
  { name: 'web', gap: true, art: <><path d="M4 2H17L23 8V26H4Z" fill="#f2f7ff" stroke="#4e82c0" strokeWidth="1.5" />{ci(14, 17, 6, '#1d7a5c', 1, '#2e92c4')}{fl('M10 14Q16 12 15 19L12 22Z', '#46b04c')}</> },
  { name: 'history', art: <>{ci(14, 14, 11, '#6a7078', 2, '#dbe6f4')}{ln('M14 6V14H21', '#111', 2)}{fl('M13 4h2v2h-2ZM13 22h2v2h-2ZM4 13h2v2H4ZM22 13h2v2h-2ZM7 7h2v2H7ZM19 19h2v2h-2ZM7 19h2v2H7ZM19 7h2v2h-2Z', '#555')}</> },
  { name: 'roles', art: <>{ci(19, 7, 5, '#b87a1c', 1, '#f0b550')}{fl('M12 20Q12 12 19 12Q27 13 27 20Z', '#2d8f3c')}{ci(9, 14, 5, '#5a3520', 2, '#f0c79a')}{fl('M1 27Q2 19 9 19Q16 20 16 27Z', '#6a63c0')}</> },
];

/* ---------- dialog ---------- */
const Dialog = styled.section`
  position: absolute;
  left: 262px;
  top: 96px;
  bottom: 0;
  width: 514px;
  display: flex;
  flex-direction: column;
  border: 1px solid #8a8a8a;
  border-width: 0 1px;
  border-radius: 6px 6px 0 0;
  background: #ebebeb;
  overflow: hidden;
`;
const DialogTitle = styled.header`
  flex: none;
  display: flex;
  align-items: center;
  justify-content: space-between;
  height: 25px;
  padding: 2px 2px 0 8px;
  color: #f2f2f2;
  background: linear-gradient(#222 0, #66696b 2px, #4a4c4e 9px, #1c1c1c 10px, #1a1a1a 100%);
`;
const Close = styled.button`
  width: 19px;
  height: 19px;
  padding: 0;
  border: 1px solid #f0a9a4;
  border-radius: 3px;
  background: linear-gradient(#ef7d75, #d4352f);
  line-height: 0;
`;
const Tabs = styled.div`
  display: flex;
  gap: 1px;
  height: 18px;
  padding: 0 0 0 2px;
`;
const Tab = styled.button<{ $w: number; $on?: boolean }>`
  flex: ${(p) => p.$w} 1 0;
  min-width: 0;
  height: 19px;
  padding: 0;
  border: 1px solid #777;
  border-radius: 4px 4px 0 0;
  background: linear-gradient(#ececec 30%, #d2d2d2);
  line-height: 16px;
  white-space: nowrap;
  ${(p) => p.$on && css`
    z-index: 1;
    height: 22px;
    margin-top: -2px;
    border-color: #aaa;
    border-bottom: 0;
    background: #ebebeb;
  `}
`;
const DialogBody = styled.div`
  flex: 1;
  display: flex;
  flex-direction: column;
  padding: 11px 11px 0 10px;
`;
const TabPanel = styled.div`
  flex: 1;
  padding: 7px 7px 0 5px;
  border: 1px solid #8c8c8c;
  border-width: 1px 2px 0 1px;
`;
const Check = styled.label<{ $focus?: boolean }>`
  display: flex;
  align-items: center;
  gap: 1px;
  height: 23px;
  width: max-content;
  input {
    appearance: none;
    width: 17px;
    height: 17px;
    border: 2px solid #7c7c7c;
    border-radius: 2px;
    background: linear-gradient(#e6e6e6, #cfcfcf 50%, #f2f2f2);
  }
  input:checked {
    border-color: #3f6f9f;
    background: linear-gradient(#dcecfb, #9fd1f5 60%, #62c9ee);
  }
  span {
    outline: ${(p) => (p.$focus ? '1px dotted #222' : '0')};
    line-height: 15px;
    padding-left: 1px;
  }
  svg { position: absolute; margin: 0 0 1px 3px; pointer-events: none; }
`;
const Radio = styled(Check)`
  gap: 0;
  height: 19px;
  padding-left: 3px;
  input {
    width: 18px;
    height: 18px;
    border-radius: 50%;
  }
  input:checked {
    background: radial-gradient(circle, #0b3d84 3px, #a8d4f8 4px, #62b9ee 7px);
  }
`;
const ComboLine = styled.div`
  display: flex;
  align-items: flex-start;
  height: 26px;
`;
const Swatch = styled.button`
  width: 107px;
  height: 17px;
  margin: 0 2px 0 0;
  padding: 0;
  border: 1px solid #6d7f96;
  background: #355f92;
`;
const ComboPair = styled.div`
  display: flex;
  padding-top: 1px;
`;
const Group = styled.fieldset`
  height: 83px;
  margin: 1px 0 3px;
  padding: 2px 0 0;
  border: 1px solid #8f8f8f;
  border-width: 2px 2px 1px 2px;
  border-bottom-color: #fbfbfb;
  background: #d1d1d1;
`;
const GroupTitle = styled.div`
  height: 19px;
  padding-left: 7px;
  font-size: 14px;
  font-weight: bold;
  line-height: 16px;
`;
const Range = styled.div`
  color: #9a9a9a;
  font-size: 13px;
`;
const RangeValue = styled.output`
  display: block;
  height: 18px;
  padding: 1px 0 0 84px;
  font-family: "Liberation Mono", monospace;
  font-size: 11px;
`;
const Slider = styled.input`
  display: block;
  appearance: none;
  width: 461px;
  max-width: 100%;
  height: 22px;
  margin: 0 0 0 7px;
  background: linear-gradient(#999, #999) 0 10px / 100% 2px no-repeat, linear-gradient(#fff, #fff) 0 12px / 100% 1px no-repeat;
  &::-webkit-slider-thumb {
    appearance: none;
    width: 10px;
    height: 19px;
    border: 1px solid #9a9a9a;
    border-radius: 5px 5px 2px 2px;
    background: #efefef;
  }
`;
const RangeEnds = styled.div`
  display: flex;
  justify-content: space-between;
  padding: 1px 0 0 4px;
  white-space: pre;
`;

const CheckItem = ({ label, on, focus }: { label: string; on?: boolean; focus?: boolean }) => (
  <Check $focus={focus}>
    <input type="checkbox" defaultChecked={on} />
    {on && <svg width="12" height="11" aria-hidden="true"><path d="M1 4L5 9L11 1" stroke="#123f80" strokeWidth="3" fill="none" /></svg>}
    <span>{label}</span>
  </Check>
);
const RadioGroup = ({ title, name, items }: { title: string; name: string; items: string[] }) => (
  <Group aria-label={title}>
    <GroupTitle>{title}</GroupTitle>
    {items.map((t, i) => (
      <Radio key={t}><input type="radio" name={name} defaultChecked={i === 0} /><span>{t}</span></Radio>
    ))}
  </Group>
);
const tabRows: [ReactNode, number][][] = [
  [['截面线', 60], ['着色', 60], ['螺纹', 60], ['基本', 59], ['局部放大图', 85], [<>继承 <Latin>PMI</Latin></>, 73], ['船舶设计线', 86]],
  [['常规', 65], ['隐藏线', 68], ['可见线', 63], ['光顺边', 66], ['虚拟交线', 77], ['追踪线', 66], ['展平图样', 78]],
];

const Ink = styled.svg`
  position: absolute;
  left: 480px;
  top: 110px;
  pointer-events: none;
`;

const snapTools: [string, boolean][] = [
  ['snapOn', true], ['snapOff', false], ['endPoint', true], ['midPoint', true], ['control', false], ['intersect', false],
  ['center', true], ['quadrant', false], ['point', true], ['onCurve', true], ['onFace', false],
];
const SmallTool = ({ name, on }: { name: string; on?: boolean }) => (
  <Tool $w={25} $on={on} aria-label={name}><Svg size={20} box={20}>{small[name]}</Svg></Tool>
);

const TopWindow = () => (
  <Window $h={362}>
    <TitleBar><TitleLatin>prt  </TitleLatin>（修改的）<TitleLatin> ]</TitleLatin></TitleBar>
    <MenuBar>
      <FirstMenu><MenuItem label="图" hot="V" /></FirstMenu>
      {menus.slice(3).map(([l, h]) => <MenuItem key={l} label={l} hot={h} />)}
    </MenuBar>
    <Bar $tone="a"><Strip items={`~saveEdge | cut copy paste del | undo redo | finder sheet v | ${VIEW_TOOLS}`} /></Bar>
    <Bar $tone="b"><Strip items={`~gearA ${DIM_TOOLS}`} /></Bar>
    <Bar $tone="c" $h={36}><Strip clip={15} items={`~assembly sketch boxCheck | ${TABLE_TOOLS}`} /></Bar>
    <Bar $tone="d"><Strip items="~d3 d4 d5 boxed paren h1 h2 h3 h4 | radius radiusDiag | circIn circOut back . |" /></Bar>
    <SelectBar>
      <Combo w={84} label="Scope" value="配" cut />
      <SmallTool name="gearBox" /><Sep />
      <SmallTool name="filter" /><Drop $w={6} aria-label="More"><Caret /></Drop>
      {['back', 'eraser', 'rotMove', 'hammer'].map((n) => <SmallTool key={n} name={n} />)}
      <Sep /><SmallTool name="lasso" /><Drop aria-label="More"><Caret /></Drop><Sep />
      {snapTools.map(([n, on]) => <SmallTool key={n} name={n} on={on} />)}
      <Sep /><SmallTool name="solid" />
    </SelectBar>
    <Prompt $pad={1}><PromptText>击，或按住并拖动来移动视图、尺寸或注释</PromptText></Prompt>
    <Body>
      <SidePanel $w={91}>
        <TopGrid>
          <Grid>
            <colgroup><col /><col width="33" /></colgroup>
            <thead><tr><th aria-label="Name" /><th>附注</th></tr></thead>
            <tbody>{[0, 1, 2].map((r) => <tr key={r}><td /><td /></tr>)}</tbody>
          </Grid>
        </TopGrid>
      </SidePanel>
      <CanvasArea $gap={256} $top={5}><Sheet /></CanvasArea>
    </Body>
  </Window>
);

const Navigator = () => (
  <SidePanel $w={227}>
    <NavHead>
      <Svg size={14} box={14}>{fl('M3 5Q6 0 12 2L11 8Q7 11 4 9Z', '#b9a521')}{ln('M3 5Q6 0 12 2L11 8Q7 11 4 9ZM4 9L1 13', '#222', 1.4)}</Svg>
      部件导航器
    </NavHead>
    <NavFrame>
      <Grid>
        <colgroup><col /><col width="32" /></colgroup>
        <thead><tr><th>名称 <svg width="26" height="7" aria-hidden="true"><path d="M11 7L17 1L23 7Z" fill="#111" /></svg></th><th>附注</th></tr></thead>
        <tbody>
          {tree.map((n, k) => (
            <tr key={k}>
              <td>
                <TreeCell $dim={n.dim}>
                  <Guide kind={n.g} />
                  {n.m && <Svg size={17} box={17}>{mark[n.m]}</Svg>}
                  <Svg size={18} box={18}>{mark[n.i]}</Svg>
                  <TreeText>{n.t}</TreeText>
                </TreeCell>
              </td>
              <td />
            </tr>
          ))}
          {[0, 1, 2, 3, 4, 5, 6].map((k) => <tr key={`e${k}`}><td /><td /></tr>)}
        </tbody>
      </Grid>
      <Scroll>
        <svg width="6" height="8" aria-hidden="true"><path d="M6 0V8L1 4Z" fill="#333" /></svg>
        <Thumb><svg width="9" height="7" aria-hidden="true"><path d="M1 0V7M4 0V7M7 0V7" stroke="#555" strokeWidth="1.5" /></svg></Thumb>
        <svg width="6" height="8" aria-hidden="true"><path d="M0 0V8L5 4Z" fill="#333" /></svg>
      </Scroll>
    </NavFrame>
  </SidePanel>
);

const Preferences = () => (
  <Dialog role="dialog" aria-label="视图首选项">
    <DialogTitle>
      视图首选项
      <Close aria-label="Close"><svg width="13" height="13" aria-hidden="true"><path d="M2 2L11 11M11 2L2 11" stroke="#fff" strokeWidth="2.5" /></svg></Close>
    </DialogTitle>
    <DialogBody>
      {tabRows.map((row, r) => (
        <Tabs key={r} role="tablist">
          {row.map(([t, w], k) => <Tab key={k} role="tab" $w={w} $on={r === 1 && k === 1}>{t}</Tab>)}
        </Tabs>
      ))}
      <TabPanel>
        <CheckItem label="隐藏线" on focus />
        <ComboLine>
          <Swatch aria-label="Color" />
          <ComboPair>
            <Combo w={110} label="Hidden line" value="不可见" />
            <Combo w={109} label="Line style" value="" line />
          </ComboPair>
        </ComboLine>
        <CheckItem label="仅参考边" />
        <CheckItem label="边隐藏边" />
        <RadioGroup title="干涉实体" name="solid" items={['无', '是，没有干涉曲线', '是，有干涉曲线']} />
        <CheckItem label="自隐藏" on />
        <CheckItem label="包含模型曲线" />
        <RadioGroup title="小特征" name="small" items={['全部显示', '简化', '隐藏']} />
        <Range>
          <RangeValue>1.0</RangeValue>
          <Slider type="range" disabled aria-label="小特征" min={0} max={100} defaultValue={19} />
          <RangeEnds><span>最小值<Latin> %</Latin></span><span>最大值<Latin> %</Latin></span></RangeEnds>
        </Range>
      </TabPanel>
    </DialogBody>
  </Dialog>
);

const MainWindow = () => (
  <Window $h={638}>
    <TitleBar $round>
      <Svg size={18}>{icons.nxTitle}</Svg>
      <TitleLatin> NX 8 - </TitleLatin>制图<TitleLatin> - [_model2.prt </TitleLatin>（修改的）<TitleLatin> ]</TitleLatin>
    </TitleBar>
    <MenuBar>
      <Start as="span"><Svg size={26}>{icons.menuSketch}</Svg></Start>
      {menus.map(([l, h], i) => i === 0
        ? <FirstMenu key={l}><MenuItem label={l} hot={h} /></FirstMenu>
        : <MenuItem key={l} label={l} hot={h} />)}
    </MenuBar>
    <Bar $tone="a"><Strip items={`: start v newDoc open save | cut copy paste del | undo redo | finder camera v | ${VIEW_TOOLS}`} /></Bar>
    <Bar $tone="b"><Strip items={`: sheet | viewWand viewBlue viewGrid auxView ${DIM_TOOLS}`} /></Bar>
    <Bar $tone="c"><Strip items={`: group stack layers | tag | assembly sketch boxCheck | ${TABLE_TOOLS}`} /></Bar>
    <Bar $tone="d" $h={36}><Strip items=": brushDim perimeter | d1 d2 d3 d4 d5 boxed paren" /></Bar>
    <SelectBar>
      <Indent />
      <Combo w={118} label="Filter" value="" ghost />
      <Combo w={125} label="Scope" value="整个装配" ghost />
    </SelectBar>
    <Prompt $pad={3}>设置视图首选项。</Prompt>
    <Body>
      <Rail>
        {railTabs.map((t) => <RailTab key={t.name} $on={t.on} $gap={t.gap} aria-label={t.name}><Svg size={26}>{t.art}</Svg></RailTab>)}
      </Rail>
      <Navigator />
      <CanvasArea $gap={60} $top={5}><Sheet /></CanvasArea>
    </Body>
    <Preferences />
  </Window>
);

export default function App() {
  return (
    <Page>
      <Global />
      <TopWindow />
      <MainWindow />
      <Ink width="200" height="720" viewBox="480 110 200 720" fill="none" stroke="#dc1414" strokeWidth="2" strokeLinejoin="round" strokeLinecap="round" aria-hidden="true">
        <path d="M550 116Q550 127 543 137L545 133Q534 157 528 176Q520 203 528 218Q535 232 550 237Q566 239 582 241Q593 241 600 228Q604 213 602 193Q599 185 580 163L569 149Q565 144 557 143L543 137" />
        <path d="M642 731Q632 726 600 725Q584 728 563 741Q557 746 552 758Q549 752 545 747Q538 741 528 741Q512 740 500 753Q492 766 495 778Q497 788 513 797Q530 803 547 808Q555 814 575 817Q600 819 625 820Q645 820 653 815Q664 806 667 780Q669 764 662 755Q654 748 640 743Q626 736 612 731" />
      </Ink>
    </Page>
  );
}
